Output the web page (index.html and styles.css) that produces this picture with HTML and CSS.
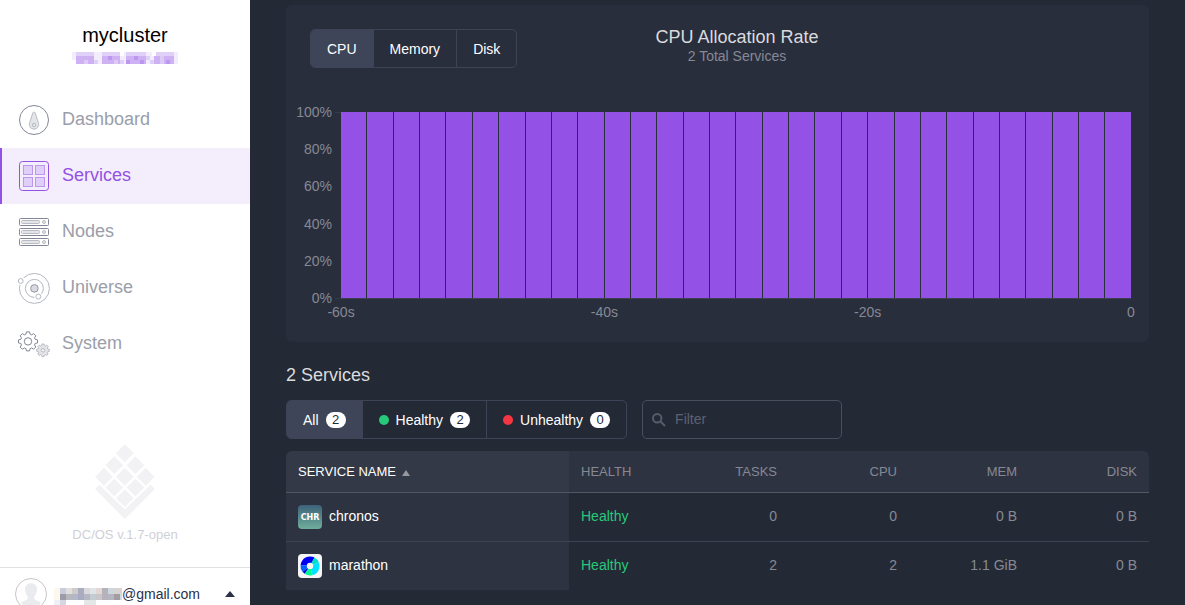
FILE: index.html
```html
<!DOCTYPE html>
<html lang="en">
<head>
<meta charset="utf-8">
<title>Services - mycluster</title>
<link rel="stylesheet" href="styles.css">
</head>
<body>
<aside class="sidebar">
  <header class="cluster">
    <h1 class="cluster-name">mycluster</h1>
    <svg class="cluster-address" width="106" height="12" viewBox="0 0 106 12" shape-rendering="crispEdges" aria-hidden="true">
      <path fill="#f3ecfd" d="M0 0h106v12H0z"/>
      <path fill="#fff" d="M0 8h4v4H0zM48 0h4v4h-4zM80 0h4v4h-4z"/>
      <path fill="#e0cff8" d="M4 0h18v4H4zM30 0h18v4H30zM54 0h20v4H54zM84 0h18v4H84zM22 8h4v4h-4zM74 4h4v4h-4zM48 8h4v4h-4zM78 8h4v4h-4z"/>
      <path fill="#cdb1f3" d="M4 4h18v8H4zM30 4h18v8H30zM54 4h20v8H54zM82 4h6v8h-6zM92 4h10v8H92z"/>
      <path fill="#dcc9f7" d="M88 4h4v8h-4zM12 8h4v4h-4zM42 8h4v4h-4z"/>
      <path fill="#bd96ef" d="M36 4h4v4h-4zM54 8h4v4h-4zM62 4h4v4h-4zM68 8h4v4h-4zM94 8h4v4h-4z"/>
    </svg>
  </header>

  <nav class="nav">
    <a class="nav-item" href="#dashboard">
      <svg class="nav-icon" viewBox="0 0 32 32" aria-hidden="true"><circle cx="16" cy="16" r="14.5"/><path class="soft" d="M14.8 9c.4-1.200 2-1.200 2.400 0l3.400 10.500a4.700 4.700 0 1 1-9.200 0z"/><circle class="soft" cx="16" cy="21" r="1.700"/></svg>
      <span>Dashboard</span>
    </a>
    <a class="nav-item is-active" href="#services" aria-current="page">
      <svg class="nav-icon" viewBox="0 0 32 32" aria-hidden="true"><rect x="1.500" y="1.500" width="29" height="29" rx="3"/><g class="soft"><rect x="5.500" y="5.500" width="9" height="9"/><rect x="17.500" y="5.500" width="9" height="9"/><rect x="5.500" y="17.500" width="9" height="9"/><rect x="17.500" y="17.500" width="9" height="9"/></g></svg>
      <span>Services</span>
    </a>
    <a class="nav-item" href="#nodes">
      <svg class="nav-icon" viewBox="0 0 32 32" aria-hidden="true"><rect x="1.500" y="2.500" width="29" height="7" rx="1"/><rect x="1.500" y="12.500" width="29" height="7" rx="1"/><rect x="1.500" y="22.500" width="29" height="7" rx="1"/><g class="soft"><rect x="3.500" y="4.500" width="18" height="3" rx="1"/><rect x="3.500" y="14.500" width="18" height="3" rx="1"/><rect x="3.500" y="24.500" width="18" height="3" rx="1"/><circle cx="26" cy="6" r="1.500"/><circle cx="26" cy="16" r="1.500"/><circle cx="26" cy="26" r="1.500"/></g></svg>
      <span>Nodes</span>
    </a>
    <a class="nav-item" href="#universe">
      <svg class="nav-icon" viewBox="0 0 32 32" aria-hidden="true"><g class="orbit"><circle cx="16.400" cy="16.400" r="15"/><circle cx="16.400" cy="16.400" r="9"/></g><circle class="gap" cx="2.700" cy="9" r="4"/><circle class="gap" cx="20.300" cy="24.600" r="4"/><g class="orbit"><circle cx="2.700" cy="9" r="2.400"/><circle cx="20.300" cy="24.600" r="2.500"/></g><circle class="core" cx="16.400" cy="16.400" r="3.800"/></svg>
      <span>Universe</span>
    </a>
    <a class="nav-item" href="#system">
      <svg class="nav-icon" viewBox="0 0 32 32" aria-hidden="true">
        <defs><path id="gear" vector-effect="non-scaling-stroke" d="M-1.600-10H1.600L2.200-7.600 3.800-6.900 5.900-8.200 8.200-5.900 6.900-3.800 7.600-2.200 10-1.600V1.600L7.600 2.200 6.900 3.800 8.200 5.900 5.900 8.200 3.800 6.900 2.200 7.600 1.600 10H-1.600L-2.200 7.600-3.800 6.900-5.900 8.200-8.200 5.900-6.900 3.800-7.600 2.200-10 1.600V-1.600L-7.600-2.200-6.900-3.800-8.200-5.900-5.900-8.200-3.800-6.900-2.200-7.600z"/></defs>
        <use href="#gear" transform="translate(10 13.400) scale(.95)"/><circle cx="10" cy="13.400" r="3.700"/>
        <g class="soft"><use href="#gear" transform="translate(25 22.300) scale(.63)"/><circle class="hole" cx="25" cy="22.300" r="1.800"/></g>
      </svg>
      <span>System</span>
    </a>
  </nav>

  <div class="product">
    <svg class="product-logo" viewBox="285 40 181 227" aria-hidden="true">
      <defs><path id="tile" d="M0-27 27 0 0 27-27 0z"/></defs>
      <use href="#tile" x="375" y="68"/><use href="#tile" x="343" y="104"/><use href="#tile" x="407" y="104"/><use href="#tile" x="312" y="139"/><use href="#tile" x="375" y="139"/><use href="#tile" x="438" y="139"/><use href="#tile" x="343" y="172"/><use href="#tile" x="407" y="172"/><use href="#tile" x="375" y="204"/>
      <path d="M298 163 375 238 453 163 466 176 375 267 285 176z"/>
    </svg>
    <p class="product-version">DC/OS v.1.7-open</p>
  </div>

  <button class="account" type="button">
    <svg width="32" height="32" viewBox="0 0 32 32" aria-hidden="true">
      <circle cx="16" cy="16" r="15.500" fill="#fff" stroke="#c5c5c8"/>
      <path fill="#e9ebee" d="M16 5.200c-4 0-6.200 2.600-6 6.300.1 3.300 1.400 5.500 2.700 7v2.300c-.5 1.600-5 2.200-6.800 4.300A14 14 0 0 0 16 30a14 14 0 0 0 10.100-4.900c-1.800-2.100-6.300-2.700-6.800-4.300v-2.300c1.300-1.500 2.600-3.700 2.700-7 .2-3.700-2-6.300-6-6.300z"/>
    </svg>
    <span class="account-name">
      <svg width="68" height="18" shape-rendering="crispEdges" aria-hidden="true">
        <path fill="#fdf8ee" d="M0 0h6v12H0z"/><path fill="#eef0f5" d="M0 12h6v6H0z"/>
        <path fill="#c9ccda" d="M6 0h6v6H6z"/><path fill="#9b9ca5" d="M6 6h6v6H6z"/><path fill="#d4d7e3" d="M6 12h6v6H6z"/>
        <path fill="#dfdfe0" d="M12 0h6v6h-6z"/><path fill="#b8b8bc" d="M12 6h6v6h-6z"/>
        <path fill="#cfccc8" d="M18 0h6v6h-6z"/><path fill="#b4b7c8" d="M18 6h6v6h-6z"/>
        <path fill="#a9acc0" d="M24 0h6v12h-6z"/><path fill="#dad9dc" d="M30 0h6v6h-6z"/><path fill="#b5b7c3" d="M30 6h6v6h-6z"/><path fill="#e4e7e8" d="M30 12h12v6H30z"/>
        <path fill="#e0e4e6" d="M36 0h6v6h-6z"/><path fill="#c3ccd2" d="M36 6h6v6h-6z"/>
        <path fill="#e1d8d4" d="M42 0h6v6h-6z"/><path fill="#c9c6cb" d="M42 6h6v6h-6z"/>
        <path fill="#b5b3b9" d="M48 0h6v12h-6z"/><path fill="#ccd6dd" d="M54 0h6v6h-6z"/><path fill="#b4b5c1" d="M54 6h6v6h-6z"/>
        <path fill="#d8d2d0" d="M60 0h8v6h-8z"/><path fill="#a29da2" d="M60 6h6v6h-6z"/><path fill="#d3d9e2" d="M66 6h2v6h-2z"/>
      </svg>
      <span>@gmail.com</span>
    </span>
    <svg class="account-caret" width="10" height="6" viewBox="0 0 10 6" aria-hidden="true"><path fill="#2b3047" d="M5 0 10 6H0z"/></svg>
  </button>
</aside>

<main class="main">
  <section class="panel">
    <header class="panel-header">
      <div class="button-group" role="group" aria-label="Resource">
        <button class="group-button is-active" type="button">CPU</button>
        <button class="group-button" type="button">Memory</button>
        <button class="group-button" type="button">Disk</button>
      </div>
      <div class="panel-title">
        <h2>CPU Allocation Rate</h2>
        <p>2 Total Services</p>
      </div>
    </header>
    <div class="chart">
      <div class="y-axis"><span>100%</span><span>80%</span><span>60%</span><span>40%</span><span>20%</span><span>0%</span></div>
      <div class="ticks"></div>
      <div class="bars"><i></i><i></i><i></i><i></i><i></i><i></i><i></i><i></i><i></i><i></i><i></i><i></i><i></i><i></i><i></i><i></i><i></i><i></i><i></i><i></i><i></i><i></i><i></i><i></i><i></i><i></i><i></i><i></i><i></i><i></i></div>
      <div class="x-axis"><span>-60s</span><span>-40s</span><span>-20s</span><span>0</span></div>
    </div>
  </section>

  <h2 class="section-title">2 Services</h2>

  <div class="toolbar">
    <div class="button-group" role="group" aria-label="Health">
      <button class="group-button is-active" type="button">All<span class="badge">2</span></button>
      <button class="group-button" type="button"><span class="dot dot-green"></span>Healthy<span class="badge">2</span></button>
      <button class="group-button" type="button"><span class="dot dot-red"></span>Unhealthy<span class="badge">0</span></button>
    </div>
    <label class="filter">
      <svg width="14" height="14" viewBox="0 0 14 14" aria-hidden="true"><circle cx="5.200" cy="5.200" r="4.200"/><path d="M8.300 8.300 13 13"/></svg>
      <input type="text" placeholder="Filter" aria-label="Filter">
    </label>
  </div>

  <table class="services">
    <colgroup><col><col class="col-health"><col class="col-number"><col class="col-number"><col class="col-number"><col class="col-number"></colgroup>
    <thead>
      <tr><th>SERVICE NAME<span class="sort"></span></th><th>HEALTH</th><th>TASKS</th><th>CPU</th><th>MEM</th><th>DISK</th></tr>
    </thead>
    <tbody>
      <tr>
        <td><a class="service" href="#chronos">
          <svg width="24" height="24" viewBox="0 0 24 24" aria-hidden="true"><defs><linearGradient id="chr" x2="0" y2="1"><stop stop-color="#3d627a"/><stop offset="1" stop-color="#6fae9c"/></linearGradient></defs><rect width="24" height="24" rx="4" fill="url(#chr)"/><text class="service-mark" x="12" y="15" text-anchor="middle">CHR</text></svg>
          <span>chronos</span></a></td>
        <td class="healthy">Healthy</td><td>0</td><td>0</td><td>0 B</td><td>0 B</td>
      </tr>
      <tr>
        <td><a class="service" href="#marathon">
          <svg width="24" height="24" viewBox="0 0 24 24" aria-hidden="true"><rect width="24" height="24" rx="4" fill="#f5f5f6"/><path fill="#0000f0" d="M12 12 2.600 11A9.500 9.500 0 0 1 16.500 3.600z"/><path fill="#00e0c8" d="M12 12 16.500 3.600A9.500 9.500 0 0 1 20.800 8.400z"/><path fill="#00e0ff" d="M12 12 20.800 8.400A9.500 9.500 0 0 1 14.500 21.200z"/><path fill="#00fa91" d="M12 12 14.500 21.200A9.500 9.500 0 0 1 6.600 19.800z"/><path fill="#0000d8" d="M12 12 6.600 19.800 4.500 17.800z"/><path fill="#0060ff" d="M12 12 4.500 17.800A9.500 9.500 0 0 1 2.600 11z"/><circle cx="12" cy="12" r="3.200" fill="#f5f5f6"/></svg>
          <span>marathon</span></a></td>
        <td class="healthy">Healthy</td><td>2</td><td>2</td><td>1.1 GiB</td><td>0 B</td>
      </tr>
    </tbody>
  </table>
</main>
</body>
</html>
```

FILE: styles.css
```css
* { box-sizing: border-box; }

body {
  display: grid;
  grid-template-columns: 250px 1fr;
  height: 100vh;
  margin: 0;
  overflow: hidden;
  background: #242936;
  font: 14px/18px "Liberation Sans", Arial, sans-serif;
}

h1, h2, p { margin: 0; font-weight: 400; }
a { color: inherit; text-decoration: none; }
button { margin: 0; border: 0; background: none; color: inherit; font: inherit; cursor: pointer; }

/* Sidebar */
.sidebar { overflow: hidden; background: #fff; }

.cluster {
  display: flex;
  flex-direction: column;
  align-items: center;
  gap: 5px;
  padding: 23px 0 28px;
}
.cluster-name { color: #000; font-size: 20px; line-height: 24px; }

.nav-item {
  display: flex;
  align-items: center;
  gap: 12px;
  height: 56px;
  padding-left: 16px;
  border-left: 2px solid transparent;
  color: #9a9eaa;
  font-size: 18px;
}
.nav-item span { padding-bottom: 2px; }
.nav-item.is-active { border-color: #9351e5; background: #f4eefc; color: #9351e5; }
.nav-icon { width: 32px; height: 32px; overflow: visible; fill: none; stroke: #828797; }
.nav-icon .soft { fill: #e4e5e8; stroke: #b9bbc4; }
.nav-icon .orbit { stroke: #b5b8c1; }
.nav-icon .core { fill: #d9dadf; stroke: #9498a5; }
.nav-icon .gap { fill: #fff; stroke: none; }
.nav-icon .hole { fill: #f4f4f6; }
.is-active .nav-icon { stroke: #9351e5; }
.is-active .nav-icon .soft { fill: #e0cff8; stroke: #bd96ef; }

.product {
  display: flex;
  flex-direction: column;
  align-items: center;
  gap: 7px;
  padding: 72px 0 23px;
}
.product-logo { width: 60px; height: 75px; fill: #f2f2f5; }
.product-version { color: #cfd0d6; font-size: 13px; }

.account {
  display: flex;
  align-items: center;
  width: 100%;
  padding: 10px 15px;
  border-top: 1px solid #e2e2e4;
  color: #2b3047;
}
.account-name { display: flex; align-items: center; margin-left: 7px; }
.account-name svg { margin-top: 6px; }
.account-caret { margin-left: auto; }

/* Main area */
.main { min-width: 0; padding: 5px 36px 0; }

.panel { border-radius: 6px; background: #292e3d; }
.panel-header { display: grid; padding: 24px 24px 35px; }
.panel-header > * { grid-area: 1 / 1; }
.panel-header .button-group { justify-self: start; z-index: 1; }
.panel-title {
  justify-self: center;
  padding-left: 39px;
  color: #868994;
  text-align: center;
}
.panel-title h2 { margin-bottom: 2px; color: #d9dadc; font-size: 18px; line-height: 16px; }

.button-group {
  display: flex;
  height: 39px;
  border: 1px solid #3e4456;
  border-radius: 5px;
  overflow: hidden;
  color: #fff;
}
.group-button { display: flex; align-items: center; padding: 0 16px; }
.group-button.is-active { background: #3e4558; }
.group-button + .group-button { border-left: 1px solid #3e4456; }

.chart { display: grid; grid-template-columns: 46px 9px 1fr; padding: 0 18px 21px 0; }
.y-axis {
  display: flex;
  flex-direction: column;
  justify-content: space-between;
  height: 204px;
  color: #868994;
  text-align: right;
}
.ticks {
  height: 187px;
  margin: 9px 0 0 3px;
  border: 1px solid #363b4b;
  border-width: 1px 0;
}
.bars {
  display: flex;
  gap: 1px;
  height: 187px;
  margin-top: 9px;
  border-bottom: 1px solid #3b3f50;
}
.bars i { flex: 1; background: #9351e5; }
.x-axis {
  grid-column: 3;
  display: flex;
  justify-content: space-between;
  margin-top: -4px;
  color: #868994;
}
.x-axis span { display: flex; justify-content: center; width: 0; }

.section-title { padding: 23px 0 14px; color: #dcdcde; font-size: 18px; line-height: 21px; }

.toolbar { display: flex; gap: 15px; margin-bottom: 12px; }
.badge {
  width: 20px;
  margin-left: 7px;
  border-radius: 8px;
  background: #fff;
  color: #242936;
  font-size: 13px;
  line-height: 16px;
  text-align: center;
}
.dot { width: 10px; height: 10px; margin-right: 7px; border-radius: 50%; }
.dot-green { background: #27c97b; }
.dot-red { background: #f43643; }

.filter {
  display: flex;
  align-items: center;
  gap: 9px;
  width: 200px;
  padding: 0 9px;
  border: 1px solid #4b4e5e;
  border-radius: 5px;
}
.filter svg { flex: none; fill: none; stroke: #595b69; stroke-width: 2; }
.filter input {
  flex: 1;
  min-width: 0;
  padding: 0 0 1px;
  border: 0;
  outline: 0;
  background: none;
  color: #fff;
  font: inherit;
}
.filter input::placeholder { color: #5d606e; opacity: 1; }

/* Services table */
.services { width: 100%; border-collapse: separate; border-spacing: 0; table-layout: fixed; color: #868994; }
.col-health { width: 100px; }
.col-number { width: 120px; }
.services th {
  height: 42px;
  padding: 0 12px;
  border-bottom: 1px solid #555664;
  background: #2e3341;
  font-size: 13px;
  font-weight: 400;
  text-align: right;
}
.services th:first-child { border-radius: 6px 0 0; background: #343947; color: #fff; }
.services th:last-child { border-radius: 0 6px 0 0; }
.services td { height: 49px; padding: 0 12px 2px; border-bottom: 1px solid #3d4150; text-align: right; }
.services tr > :nth-child(-n+2) { text-align: left; }
.services td:first-child { padding-bottom: 0; background: #2e3341; color: #fff; }
.services tbody tr:last-child td { height: 48px; border-bottom: 0; }
.services .healthy { color: #27c97b; }
.service { display: flex; align-items: center; gap: 7px; }
.service span { padding-bottom: 2px; }
.service-mark { fill: #fff; font: bold 8px "DejaVu Sans", sans-serif; }
.sort {
  display: inline-block;
  margin-left: 6px;
  border: 4px solid transparent;
  border-top: 0;
  border-bottom: 6px solid #96979f;
}
```
